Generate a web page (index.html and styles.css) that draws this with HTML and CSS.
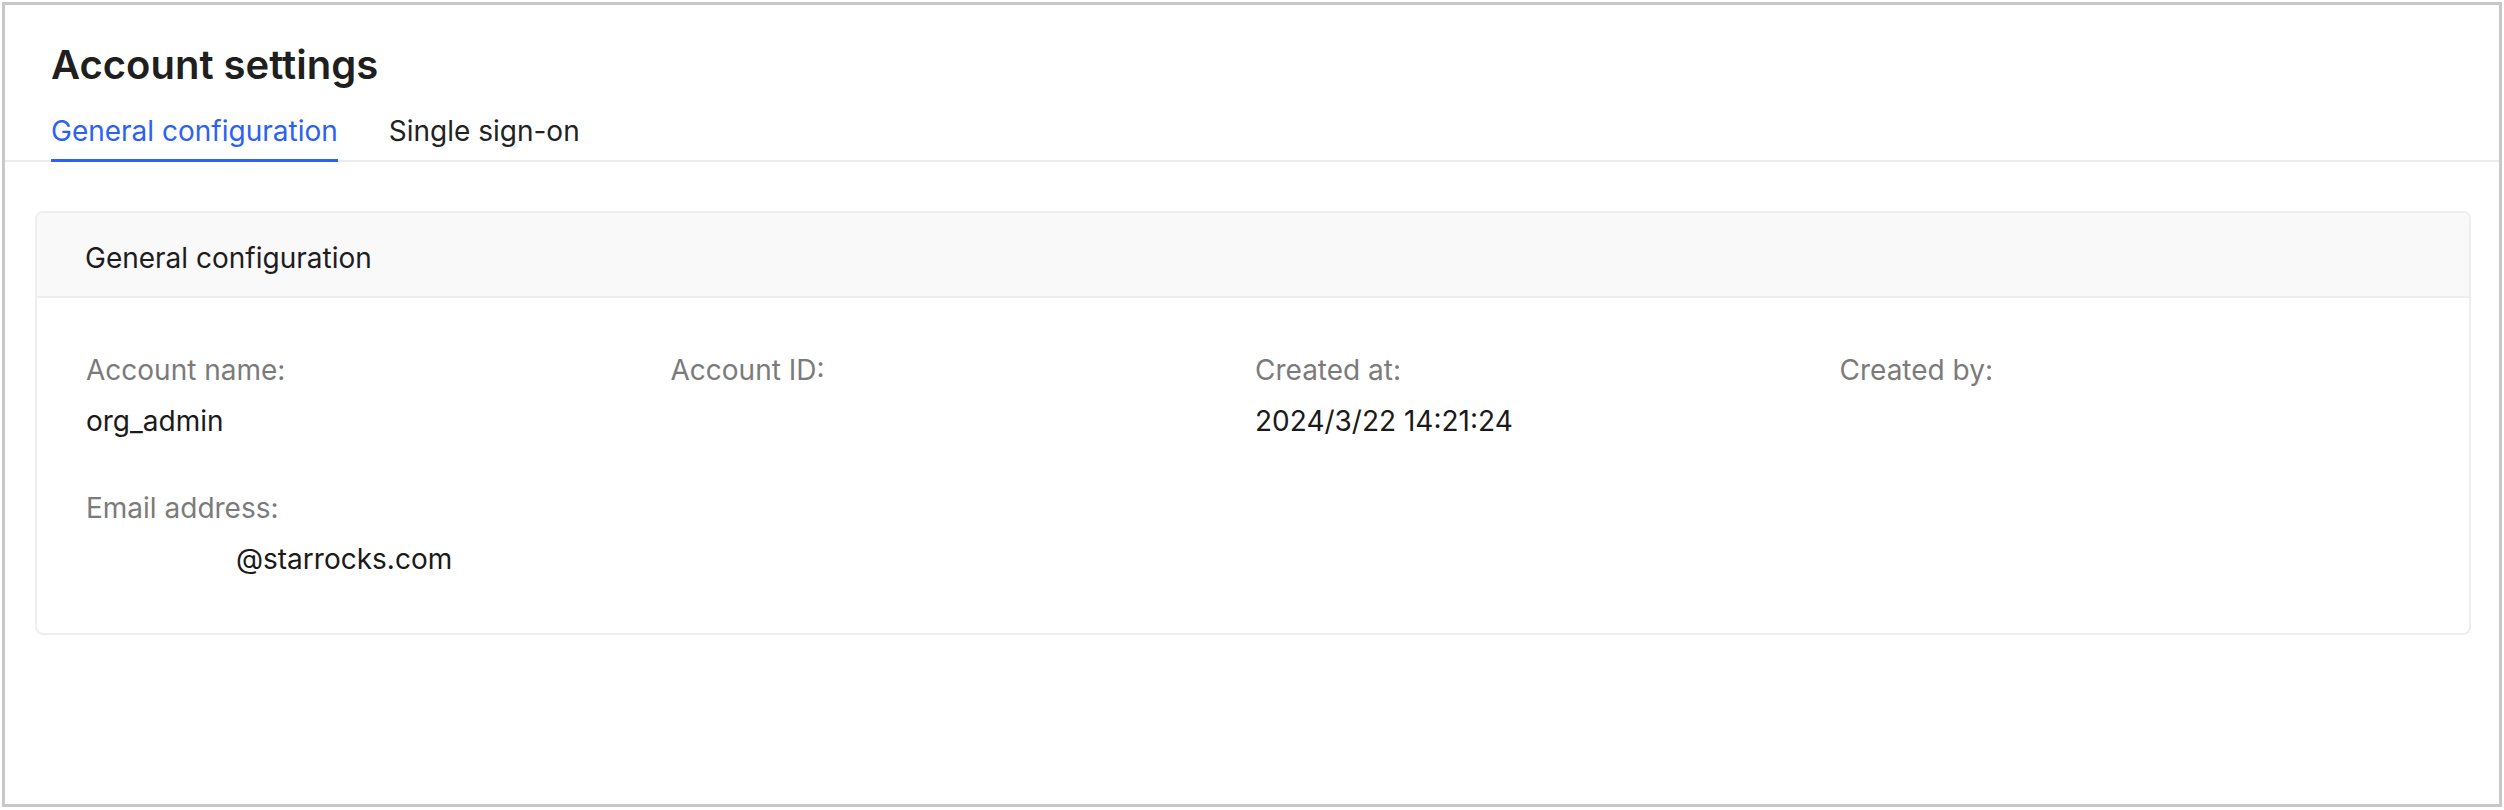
FILE: index.html
```html
<!DOCTYPE html>
<html lang="en">
<head>
  <meta charset="UTF-8">
  <title>Account settings</title>
  <link rel="stylesheet" href="styles.css">
</head>
<body>
  <div class="frame">
    <header class="page-header">
      <h1>Account settings</h1>
      <nav class="tabs">
        <a class="tab active" href="#">General configuration</a>
        <a class="tab" href="#">Single sign-on</a>
      </nav>
    </header>

    <main class="content">
      <section class="card">
        <div class="card-head">General configuration</div>
        <div class="card-body">
          <div class="field">
            <div class="label">Account name:</div>
            <div class="value">org_admin</div>
          </div>
          <div class="field">
            <div class="label">Account ID:</div>
            <div class="value"></div>
          </div>
          <div class="field">
            <div class="label">Created at:</div>
            <div class="value">2024/3/22 14:21:24</div>
          </div>
          <div class="field">
            <div class="label">Created by:</div>
            <div class="value"></div>
          </div>
          <div class="field">
            <div class="label">Email address:</div>
            <div class="value"><span class="redacted"></span>@starrocks.com</div>
          </div>
        </div>
      </section>
    </main>
  </div>
</body>
</html>
```

FILE: styles.css
```css
body {
  margin: 0;
  padding: 2px;
  font-family: Inter, "Noto Sans", sans-serif;
  background: #ffffff;
  color: #1d1d1f;
}

.frame {
  border: 3px solid #c8c8c8;
  height: 799px;
  background: #ffffff;
}

.page-header {
  padding: 38px 0 0 46px;
  border-bottom: 2px solid #ebebeb;
}

h1 {
  margin: 0 0 26px;
  font-size: 40px;
  line-height: 44px;
  font-weight: 600;
  color: #1f1f1f;
}

.tabs {
  display: flex;
  gap: 51px;
  margin-bottom: -2px;
}

.tab {
  font-size: 28px;
  line-height: 36px;
  padding-bottom: 10px;
  border-bottom: 3px solid transparent;
  color: #222222;
  text-decoration: none;
}

.tab.active {
  color: #2b62f4;
  border-bottom-color: #2b62f4;
}

.content {
  padding: 49px 28px 0 30px;
}

.card {
  border: 2px solid #eeeeee;
  border-radius: 8px;
  overflow: hidden;
}

.card-head {
  background: #f9f9f9;
  border-bottom: 2px solid #eeeeee;
  padding: 27px 48px 20px;
  font-size: 28px;
  line-height: 36px;
  color: #1d1d1f;
}

.card-body {
  display: grid;
  grid-template-columns: repeat(4, 1fr);
  row-gap: 51px;
  padding: 54px 45px 56px 49px;
}

.field {
  display: flex;
  flex-direction: column;
  gap: 15px;
}

.label {
  font-size: 28px;
  line-height: 36px;
  color: #7b7b7b;
}

.value {
  font-size: 28px;
  line-height: 36px;
  min-height: 36px;
  color: #1a1a1a;
}

.redacted {
  display: inline-block;
  width: 150px;
}
```
